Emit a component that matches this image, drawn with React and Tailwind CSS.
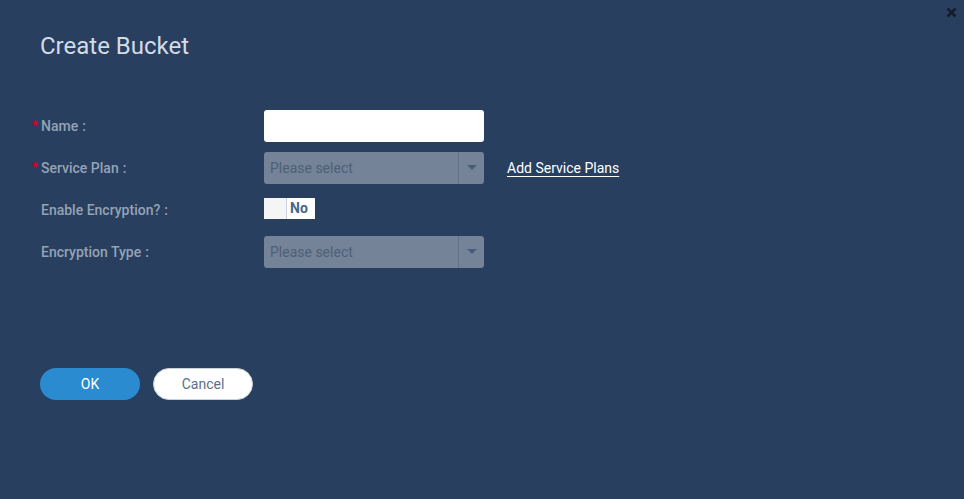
import { useState } from 'react';

const Label = ({ required, children }) => (
  <div className="w-[232px] flex items-center text-[14px] font-medium text-[#94a3b6]">
    <span className="w-[9px] text-[#e0001b] text-[13px] leading-none -mt-[3px]">{required ? '*' : ''}</span>
    <span>{children}</span>
    <span className="ml-[4px]">:</span>
  </div>
);

const Select = () => (
  <div className="w-[220px] h-[32px] rounded-[3px] bg-[#748397] flex items-stretch">
    <div className="flex-1 flex items-center pl-[6px] text-[14px] text-[#4f5f76]">Please select</div>
    <div className="w-[26px] border-l border-[#62718a] flex items-center justify-center">
      <svg width="10" height="6" viewBox="0 0 10 6"><path d="M0 0h10L5 5z" fill="#4a5d78" /></svg>
    </div>
  </div>
);

export default function App() {
  const [name, setName] = useState('');
  return (
    <div className="w-[964px] h-[499px] bg-[#283f5f] relative font-['Roboto',sans-serif] overflow-hidden">
      <button className="absolute right-[7px] top-[7px] text-[#161c2c]">
        <svg width="11" height="11" viewBox="0 0 11 11">
          <path d="M1.5 1.5l8 8M9.5 1.5l-8 8" stroke="currentColor" strokeWidth="2.6" />
        </svg>
      </button>
      <div className="pl-[40px] pt-[31px]">
        <h1 className="text-[24px] text-[#d2dbe6] leading-[30px]">Create Bucket</h1>
      </div>
      <div className="pl-[32px] pt-[49px] flex flex-col gap-[10px]">
        <div className="flex items-center h-[32px]">
          <Label required>Name</Label>
          <input
            value={name}
            onChange={(e) => setName(e.target.value)}
            className="w-[220px] h-[32px] rounded-[3px] bg-white outline-none px-2 text-[14px]"
          />
        </div>
        <div className="flex items-center h-[32px]">
          <Label required>Service Plan</Label>
          <Select />
          <a className="ml-[23px] text-[14px] text-white underline underline-offset-[3px]">Add Service Plans</a>
        </div>
        <div className="flex items-center h-[32px]">
          <Label>Enable Encryption?</Label>
          <div className="flex h-[21px] -mt-[4px] bg-white">
            <div className="w-[23px] border-r border-[#c8cfd8] bg-[#f5f5f5]"></div>
            <div className="w-[28px] pl-[3px] text-[14px] font-bold text-[#45658a] flex items-center">No</div>
          </div>
        </div>
        <div className="flex items-center h-[32px]">
          <Label>Encryption Type</Label>
          <Select />
        </div>
      </div>
      <div className="pl-[40px] pt-[100px] flex gap-[13px]">
        <button className="w-[100px] h-[32px] rounded-full bg-[#2a8bd0] text-white text-[14px]">OK</button>
        <button className="w-[100px] h-[32px] rounded-full bg-white border border-[#c8d0da] text-[#5a6f88] text-[14px]">Cancel</button>
      </div>
    </div>
  );
}
